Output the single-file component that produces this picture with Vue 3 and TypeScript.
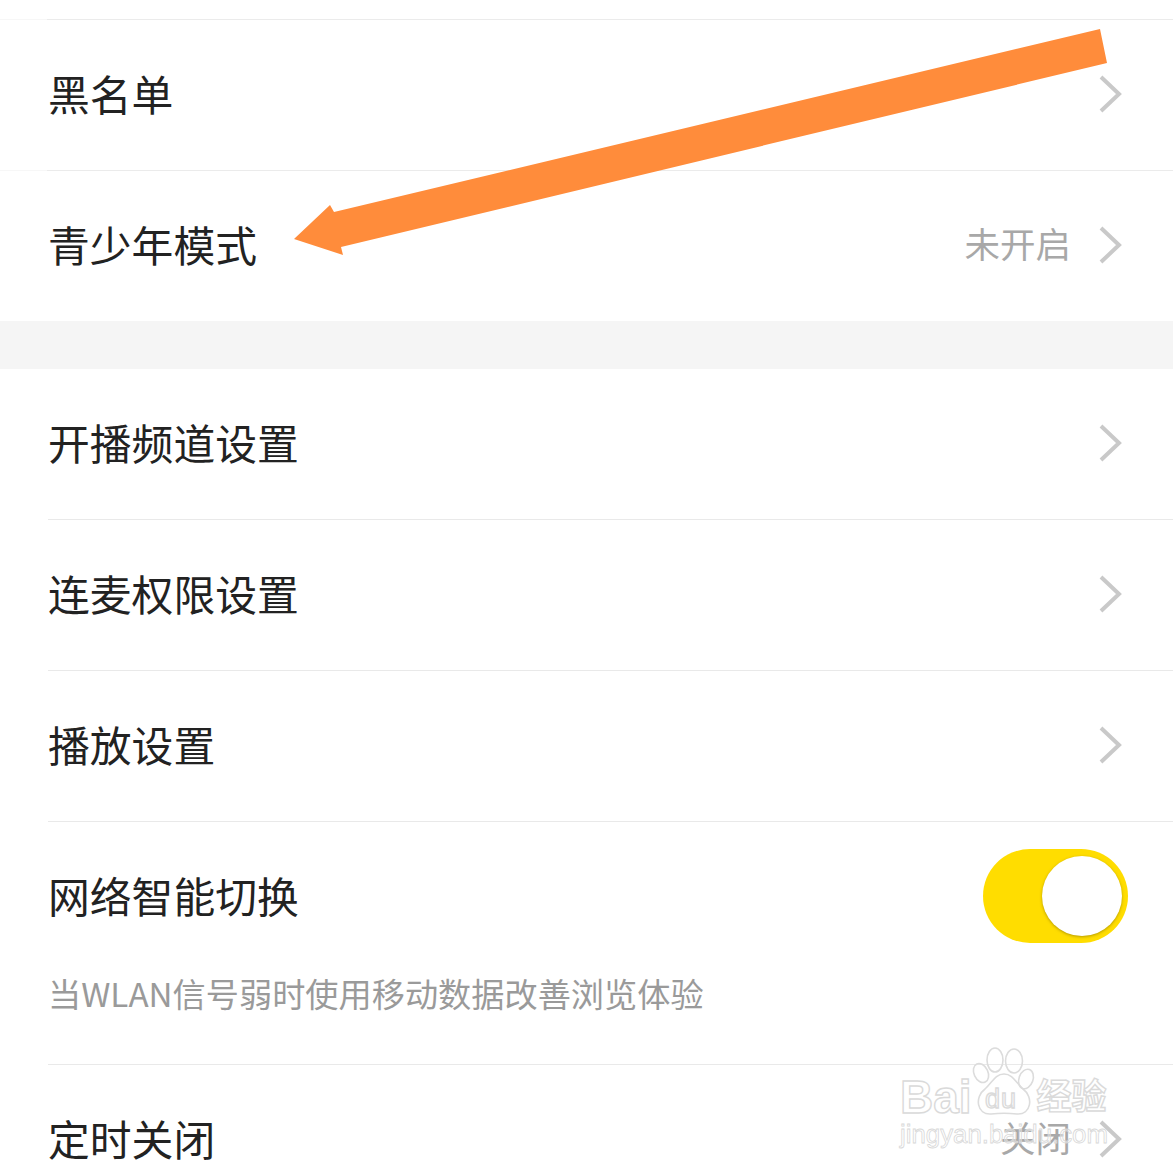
<template>
  <div class="page">
    <div class="top-stub"></div>

    <div v-for="group in groups" :key="group.id" class="group">
      <div
        v-for="row in group.rows"
        :key="row.title"
        class="row"
        :class="{ 'row-full': group.full, 'row-tall': row.sub }"
      >
        <div class="row-main">
          <span class="title">{{ row.title }}</span>
          <span v-if="row.value" class="value">{{ row.value }}</span>
          <div v-if="row.toggle" class="toggle"><div class="knob"></div></div>
          <svg v-else class="chevron" width="26" height="40" viewBox="0 0 26 40">
            <path d="M4 3 L22 20 L4 37" fill="none" stroke="#c9c9c9" stroke-width="4" />
          </svg>
        </div>
        <p v-if="row.sub" class="sub">{{ row.sub }}</p>
      </div>
    </div>

    <!-- annotation drawn over the screenshot -->
    <svg class="arrow" width="1173" height="300" viewBox="0 0 1173 300">
      <polygon
        points="1100,29 1107,63 341,247 343,255 294,239 330,205 334,212"
        fill="#ff8c3b"
      />
    </svg>

    <div class="watermark">
      <div class="wm-line">
        <span class="wm-big">Bai</span>
        <svg class="paw" width="66" height="70" viewBox="0 0 66 70">
          <g fill="none" stroke="#dcdcdc" stroke-width="1.6">
            <ellipse cx="10" cy="27" rx="7" ry="10" transform="rotate(-25 10 27)" />
            <ellipse cx="24" cy="14" rx="8" ry="12" />
            <ellipse cx="43" cy="15" rx="8.5" ry="12" />
            <ellipse cx="55" cy="33" rx="7" ry="10" transform="rotate(20 55 33)" />
            <path d="M33 28 C24 28 21 37 14 43 C3 51 6 69 20 68 C28 67 38 67 46 68 C60 69 63 51 52 43 C45 37 42 28 33 28 Z" />
          </g>
        </svg>
        <span class="wm-du">du</span>
        <span class="wm-cn">经验</span>
      </div>
      <div class="wm-url">jingyan.baidu.com</div>
    </div>
  </div>
</template>

<script setup lang="ts">
interface Row {
  title: string
  value?: string
  sub?: string
  toggle?: boolean
}

interface Group {
  id: string
  full?: boolean
  rows: Row[]
}

const groups: Group[] = [
  {
    id: 'account',
    full: true,
    rows: [{ title: '黑名单' }, { title: '青少年模式', value: '未开启' }],
  },
  {
    id: 'live',
    rows: [
      { title: '开播频道设置' },
      { title: '连麦权限设置' },
      { title: '播放设置' },
      { title: '网络智能切换', toggle: true, sub: '当WLAN信号弱时使用移动数据改善浏览体验' },
      { title: '定时关闭', value: '关闭' },
    ],
  },
]
</script>

<style>
html,
body {
  margin: 0;
  background: #fff;
}
</style>

<style scoped>
.page {
  position: relative;
  width: 1173px;
  height: 1173px;
  overflow: hidden;
  background: #fff;
  font-family: "Noto Sans CJK SC", "Liberation Sans", sans-serif;
}

.top-stub {
  height: 19px;
  border-bottom: 1px solid #ececec;
  border-image: linear-gradient(to right, #f7f7f7 48px, #ebebeb 48px) 1;
}

.group + .group {
  border-top: 48px solid #f5f5f5;
}

.row {
  margin-left: 48px;
  height: 150px;
  border-top: 1px solid #e9e9e9;
}

.group > .row:first-child {
  margin-left: 0;
  border-top: none;
}

.row-full {
  margin-left: 0;
}

.row-full + .row-full {
  border-image: linear-gradient(to right, #f7f7f7 48px, #ebebeb 48px) 1;
}

.group:last-child .row:nth-child(3) {
  height: 151px;
  border-top-color: #e2e2e2;
}

.row-main {
  display: flex;
  align-items: center;
  height: 150px;
  padding-right: 50px;
  padding-bottom: 2px;
  box-sizing: border-box;
}

.row-full .row-main,
.group > .row:first-child .row-main {
  padding-left: 48px;
}

.row-tall {
  height: 242px;
}

.title {
  flex: 1;
  font-size: 41.8px;
  line-height: 50px;
  margin-bottom: 2px;
  color: #222;
}

.value {
  font-size: 35.5px;
  color: #a8a8a8;
  margin-right: 26px;
  margin-bottom: 6px;
}

.chevron {
  flex: none;
}

.toggle {
  flex: none;
  display: flex;
  align-items: center;
  justify-content: flex-end;
  width: 145px;
  height: 94px;
  margin-right: -5px;
  padding-right: 6px;
  box-sizing: border-box;
  border-radius: 47px;
  background: #ffdd00;
}

.knob {
  width: 80px;
  height: 80px;
  border-radius: 50%;
  background: #fff;
  box-shadow: 0 1px 3px rgba(120, 100, 0, 0.55);
}

.sub {
  margin: -1px 0 0;
  font-size: 33.2px;
  line-height: 44px;
  color: #9a9a9a;
}

.arrow {
  position: absolute;
  left: 0;
  top: 0;
  pointer-events: none;
}

.watermark {
  position: absolute;
  left: 900px;
  top: 1046px;
  width: 215px;
  pointer-events: none;
}

.wm-line {
  position: relative;
  display: flex;
  align-items: flex-start;
  height: 70px;
}

.wm-big,
.wm-cn,
.wm-du {
  color: #fff;
  -webkit-text-stroke: 1.4px #dadada;
  font-family: "Liberation Sans", "Noto Sans CJK SC", sans-serif;
  font-weight: 700;
}

.wm-big {
  font-size: 46px;
  line-height: 50px;
  margin-top: 26px;
  margin-right: -1px;
}

.paw {
  flex: none;
}

.wm-du {
  position: absolute;
  left: 85px;
  top: 41px;
  font-size: 27px;
  line-height: 24px;
  letter-spacing: 1px;
  font-weight: 400;
}

.wm-cn {
  font-size: 35px;
  line-height: 50px;
  margin-top: 26px;
}

.wm-url {
  margin-top: 3px;
  font-family: "Liberation Sans", sans-serif;
  font-size: 25.8px;
  line-height: 30px;
  color: rgba(255, 255, 255, 0.4);
  -webkit-text-stroke: 0.8px #d8d8d8;
  white-space: nowrap;
}
</style>
